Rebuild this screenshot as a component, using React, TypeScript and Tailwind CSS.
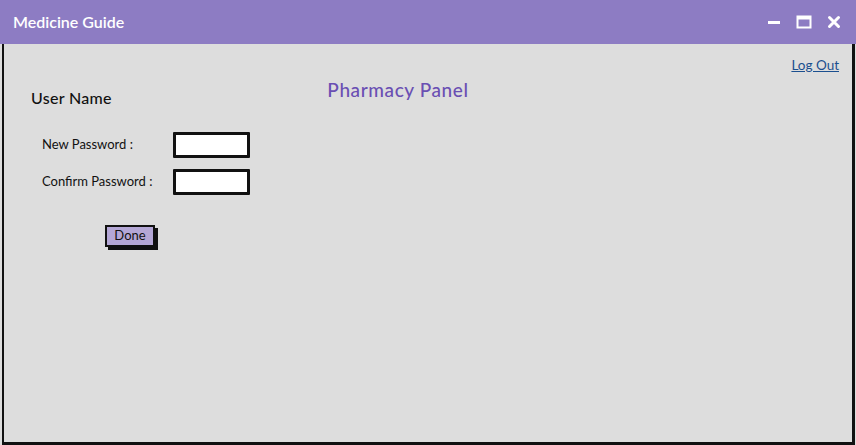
import React from 'react';

export default function App() {
  return (
    <div className="w-[856px] h-[445px] flex flex-col bg-[#dddddd] overflow-hidden" style={{ fontFamily: 'Lato, "Open Sans", sans-serif' }}>
      {/* title bar */}
      <div className="h-[44px] shrink-0 bg-[#8d7cc3] flex items-center justify-between pl-[13px] pr-[15px]">
        <span className="text-white text-[16px] font-semibold">Medicine Guide</span>
        <div className="flex items-center gap-[15px]">
          <svg width="14" height="14" viewBox="0 0 14 14">
            <rect x="1" y="6" width="12" height="3" fill="white" />
          </svg>
          <svg width="16" height="14" viewBox="0 0 16 14">
            <rect x="1.5" y="1.5" width="13" height="11" fill="none" stroke="white" strokeWidth="2" />
            <rect x="1.5" y="1.5" width="13" height="3" fill="white" />
          </svg>
          <svg width="14" height="14" viewBox="0 0 14 14">
            <path d="M2.5 2.5 L11.5 11.5 M11.5 2.5 L2.5 11.5" stroke="white" strokeWidth="3" strokeLinecap="round" />
          </svg>
        </div>
      </div>

      {/* body */}
      <div className="flex-1 ml-[2px] mr-[1px] border-l-2 border-r-[3px] border-b-[3px] border-[#111] flex flex-col relative">
        <div className="flex justify-end pr-[13px] pt-[15px]">
          <a className="text-[13.5px] text-[#1b4f8f] underline leading-none">Log Out</a>
        </div>
        <div className="flex items-start">
          <div className="pl-[27px] pt-[13px] w-[300px] flex flex-col">
            <span className="text-[16px] font-medium text-[#111] tracking-[0.3px]">User Name</span>
            <div className="mt-[22px] pl-[11px] flex flex-col gap-[11px]">
              <div className="flex items-center">
                <span className="w-[131px] text-[13px] text-[#111]">New Password :</span>
                <div className="w-[77px] h-[26px] bg-white border-[3px] border-[#111] rounded-[1px]" />
              </div>
              <div className="flex items-center">
                <span className="w-[131px] text-[13px] text-[#111]">Confirm Password :</span>
                <div className="w-[77px] h-[26px] bg-white border-[3px] border-[#111] rounded-[1px]" />
              </div>
            </div>
            <div className="mt-[30px] pl-[74px]">
              <button className="w-[50px] h-[22px] bg-[#b4a7d6] border-2 border-[#111] shadow-[3px_3px_0_#111] text-[13px] text-[#111] flex items-center justify-center">
                Done
              </button>
            </div>
          </div>
          <div className="w-[196px] flex justify-center pt-[3px] pr-[8px]">
            <span className="text-[19px] font-medium text-[#6a4fb3] tracking-[0.6px]">Pharmacy Panel</span>
          </div>
        </div>
      </div>
    </div>
  );
}
